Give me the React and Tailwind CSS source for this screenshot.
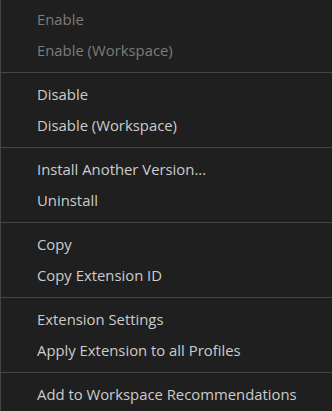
const groups = [
  [
    { label: "Enable", disabled: true },
    { label: "Enable (Workspace)", disabled: true },
  ],
  [{ label: "Disable" }, { label: "Disable (Workspace)" }],
  [{ label: "Install Another Version..." }, { label: "Uninstall" }],
  [{ label: "Copy" }, { label: "Copy Extension ID" }],
  [{ label: "Extension Settings" }, { label: "Apply Extension to all Profiles" }],
  [{ label: "Add to Workspace Recommendations" }],
];

export default function App() {
  return (
    <div
      className="h-[411px] w-[332px] overflow-hidden border-l border-[#454545] bg-[#1f1f1f] pt-[4px] text-[14.85px]"
      style={{ fontFamily: '"Open Sans", "Noto Sans", sans-serif' }}
    >
      {groups.map((group, i) => (
        <div key={i}>
          {i > 0 && (
            <div className="flex h-[13px] items-center">
              <div className="h-px w-full bg-[#454545]" />
            </div>
          )}
          {group.map((item) => (
            <div
              key={item.label}
              className={`flex h-[31px] items-center whitespace-nowrap pl-[36px] ${
                item.disabled ? "text-[#7c7c7c]" : "text-[#cccccc]"
              }`}
            >
              {item.label}
            </div>
          ))}
        </div>
      ))}
    </div>
  );
}
